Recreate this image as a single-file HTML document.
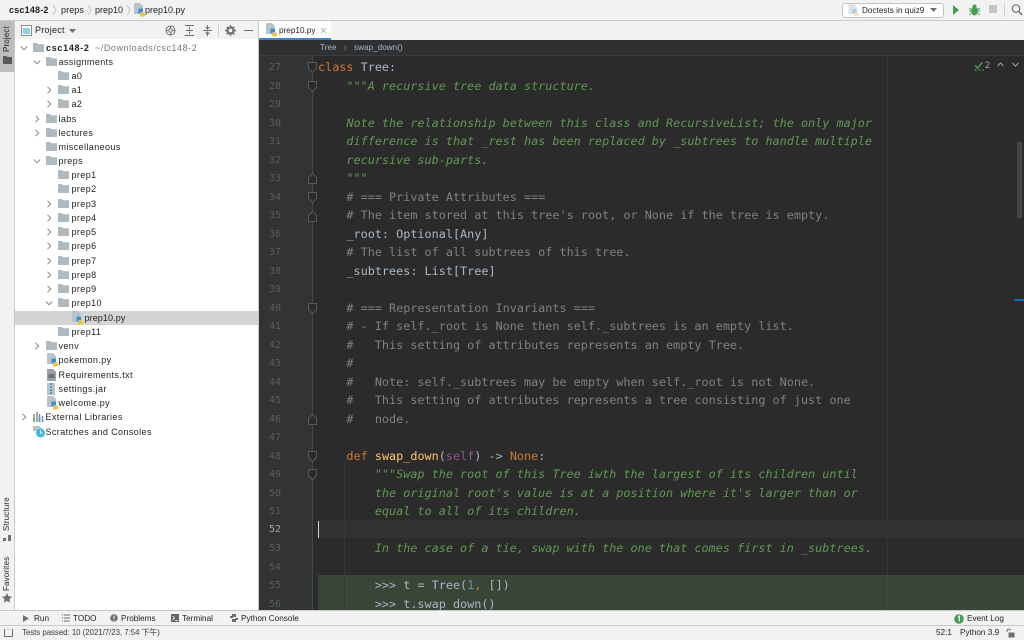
<!DOCTYPE html>
<html><head><meta charset="utf-8">
<style>
html,body{margin:0;padding:0;width:1024px;height:640px;overflow:hidden;background:#f2f2f2}
body{font-family:"Liberation Sans","Noto Sans CJK SC",sans-serif;font-size:9px;color:#1f1f1f;position:relative;filter:blur(.3px)}
.a{position:absolute}
.t{position:absolute;white-space:pre;line-height:12px;letter-spacing:.1px}
.row{position:absolute;left:15px;width:243px;height:14px}
.row .l{position:absolute;top:1px;white-space:pre;line-height:12px;letter-spacing:.4px}
.row svg{position:absolute}
.c{position:absolute;left:318px;white-space:pre;font-family:"DejaVu Sans Mono","Liberation Mono",monospace;font-size:11.8px;line-height:18px;color:#a9b7c6}
.n{position:absolute;left:262px;width:19px;margin-top:1px;text-align:right;font-family:"DejaVu Sans Mono","Liberation Mono",monospace;font-size:10px;line-height:18px;color:#5a5d60}
.k{color:#cc7832}.d{color:#629755;font-style:italic}.m{color:#808080}.f{color:#ffc66d}.s{color:#94558d}.b{color:#6897bb}
.v{position:absolute;transform:rotate(-90deg);transform-origin:0 0;white-space:pre;font-size:8px;line-height:10px;letter-spacing:.15px}
.bt{position:absolute;margin-top:1px;white-space:pre;line-height:12px;font-size:8.2px;letter-spacing:0}
</style></head><body>
<svg width="0" height="0" style="position:absolute">
<defs>
<symbol id="fo" viewBox="0 0 11 9"><path d="M0 0h4l1 1.200h6V9H0z" fill="#aeb9c0"/></symbol>
<symbol id="py" viewBox="0 0 12 14"><path d="M0 0h6l3 3v8H0z" fill="#b9c3cb"/><path d="M4.500 6.500a1 1 0 0 1 1-1h2.500a1 1 0 0 1 1 1V9H6.500v1.500h-2z" fill="#3f8fc9"/><path d="M6 11h2.500V9.500H11V12a1.500 1.500 0 0 1-1.500 1.500H7A1 1 0 0 1 6 12.500z" fill="#f5c52d"/></symbol>
<symbol id="r" viewBox="0 0 8 8"><path d="M2.500 .8l3.200 3.200-3.200 3.200" fill="none" stroke="#858585" stroke-width="1"/></symbol>
<symbol id="dn" viewBox="0 0 8 8"><path d="M.8 2.500l3.200 3.200 3.200-3.200" fill="none" stroke="#858585" stroke-width="1"/></symbol>
<symbol id="fd" viewBox="0 0 9 11"><path d="M.5.5h8v6l-4 4-4-4z" fill="#2b2b2b" stroke="#55585a"/></symbol>
<symbol id="fu" viewBox="0 0 9 11"><path d="M.5 10.500h8v-6l-4-4-4 4z" fill="#2b2b2b" stroke="#55585a"/></symbol>
</defs></svg>

<!-- top nav -->
<div class="a" style="left:0;top:20px;width:1024px;height:1px;background:#c9c9c9"></div>
<div class="t" style="left:9px;top:4px;font-weight:bold;letter-spacing:.2px">csc148-2</div>
<div class="t" style="left:61px;top:4px">preps</div>
<div class="t" style="left:95px;top:4px;letter-spacing:0">prep10</div>
<div class="t" style="left:145px;top:4px;letter-spacing:0">prep10.py</div>
<svg class="a" style="left:52px;top:4px" width="6" height="12"><path d="M1 1l3 5-3 5" fill="none" stroke="#c4c4c4"/></svg>
<svg class="a" style="left:87px;top:4px" width="6" height="12"><path d="M1 1l3 5-3 5" fill="none" stroke="#c4c4c4"/></svg>
<svg class="a" style="left:126px;top:4px" width="6" height="12"><path d="M1 1l3 5-3 5" fill="none" stroke="#c4c4c4"/></svg>
<svg class="a" style="left:134px;top:3px" width="12" height="14"><use href="#py"/></svg>

<!-- run config -->
<div class="a" style="left:842px;top:3px;width:100px;height:13px;background:#fff;border:1px solid #c4c4c4;border-radius:3px"></div>
<svg class="a" style="left:848px;top:4px" width="12" height="13"><use href="#py" opacity=".45"/></svg>
<div class="bt" style="left:862px;top:4px">Doctests in quiz9</div>
<svg class="a" style="left:930px;top:7px" width="8" height="6"><path d="M0 1h7L3.500 5z" fill="#6e6e6e"/></svg>
<svg class="a" style="left:952px;top:5px" width="9" height="10"><path d="M1 0l6 5-6 5z" fill="#499c54"/></svg>
<svg class="a" style="left:969px;top:4px" width="11" height="12"><ellipse cx="5.500" cy="7" rx="3.500" ry="4.500" fill="#499c54"/><path d="M0 4l2 1.500M11 4L9 5.500M0 7h2M9 7h2M0 11l2-1.500M11 11l-2-1.500" stroke="#499c54"/><circle cx="5.500" cy="2.500" r="2" fill="#499c54"/></svg>
<div class="a" style="left:989px;top:5px;width:8px;height:8px;background:#c4c4c4"></div>
<div class="a" style="left:1004px;top:3px;width:1px;height:14px;background:#d0d0d0"></div>
<svg class="a" style="left:1011px;top:3px" width="12" height="13"><circle cx="5" cy="5.500" r="3.700" fill="none" stroke="#6e6e6e" stroke-width="1.200"/><path d="M8 8.500l3 3.500" stroke="#6e6e6e" stroke-width="1.400"/></svg>

<!-- left strip -->
<div class="a" style="left:0;top:21px;width:14px;height:590px;background:#f2f2f2;border-right:1px solid #c9c9c9"></div>
<div class="a" style="left:0;top:21px;width:14px;height:51px;background:#bdbdbd"></div>
<div class="v" style="left:2px;top:52px">Project</div>
<svg class="a" style="left:3px;top:56px" width="9" height="8"><path d="M0 0h3.500l1 1H9v7H0z" fill="#595959"/></svg>
<div class="v" style="left:2px;top:531px">Structure</div>
<svg class="a" style="left:3px;top:535px" width="9" height="6"><path d="M0 3h3v3H0zM5 0h3v6H5z" fill="#6e6e6e"/></svg>
<div class="v" style="left:2px;top:591px">Favorites</div>
<svg class="a" style="left:2px;top:593px" width="10" height="10"><path d="M5 0l1.500 3.300 3.500.4-2.600 2.400.7 3.500L5 7.900 1.900 9.600l.7-3.500L0 3.700l3.500-.4z" fill="#6e6e6e"/></svg>

<!-- project panel -->
<div class="a" style="left:15px;top:21px;width:244px;height:18px;background:#f2f2f2"></div>
<div class="a" style="left:15px;top:39px;width:244px;height:572px;background:#fff"></div>
<svg class="a" style="left:21px;top:25px" width="11" height="11"><rect x=".5" y=".5" width="10" height="10" fill="#fff" stroke="#8a8f94"/><rect x="2" y="3" width="7" height="6" fill="#8ed0ee"/></svg>
<div class="t" style="left:35px;top:24px;letter-spacing:.25px">Project</div>
<svg class="a" style="left:69px;top:28px" width="8" height="6"><path d="M0 1h7L3.500 5z" fill="#6e6e6e"/></svg>
<svg class="a" style="left:165px;top:25px" width="11" height="11"><circle cx="5.500" cy="5.500" r="4.500" fill="none" stroke="#6e6e6e"/><circle cx="5.500" cy="5.500" r="1.800" fill="none" stroke="#6e6e6e"/><path d="M5.500 1v2M5.500 8v2M1 5.500h2M8 5.500h2" stroke="#6e6e6e"/></svg>
<svg class="a" style="left:184px;top:25px" width="11" height="11"><path d="M1 .5h9M1 10.500h9M2 5.500h7M5.500 2v2.500M5.500 6.500V9" stroke="#6e6e6e" fill="none"/></svg>
<svg class="a" style="left:202px;top:25px" width="11" height="11"><path d="M1 5.500h9M5.500 0v3M5.500 8v3M3.500 2l2 2 2-2M3.500 9l2-2 2 2" stroke="#6e6e6e" fill="none"/></svg>
<div class="a" style="left:218px;top:23px;width:1px;height:14px;background:#d0d0d0"></div>
<svg class="a" style="left:225px;top:25px" width="11" height="11"><circle cx="5.500" cy="5.500" r="3" fill="none" stroke="#6e6e6e" stroke-width="2.200"/><path d="M5.500 0v2M5.500 9v2M0 5.500h2M9 5.500h2M1.700 1.700l1.400 1.400M8 8l1.400 1.400M9.300 1.700L8 3.100M3 8l-1.400 1.400" stroke="#6e6e6e" stroke-width="1.400"/></svg>
<div class="a" style="left:244px;top:30px;width:9px;height:1px;background:#6e6e6e"></div>

<!-- tree -->
<div class="a" style="left:15px;top:311px;width:243px;height:14px;background:#d4d4d4"></div>
<div class="row" style="top:41px"><svg style="left:5px;top:3px" width="8" height="8"><use href="#dn"/></svg><svg style="left:18px;top:2px" width="11" height="9"><use href="#fo"/></svg><span class="l" style="left:31px;font-weight:bold;letter-spacing:.7px">csc148-2</span><span class="l" style="left:80px;color:#787878;letter-spacing:.55px">~/Downloads/csc148-2</span></div>
<div class="row" style="top:55px"><svg style="left:18px;top:3px" width="8" height="8"><use href="#dn"/></svg><svg style="left:31px;top:2px" width="11" height="9"><use href="#fo"/></svg><span class="l" style="left:43.500px">assignments</span></div>
<div class="row" style="top:69px"><svg style="left:43px;top:2px" width="11" height="9"><use href="#fo"/></svg><span class="l" style="left:56.500px">a0</span></div>
<div class="row" style="top:83px"><svg style="left:30px;top:3px" width="8" height="8"><use href="#r"/></svg><svg style="left:43px;top:2px" width="11" height="9"><use href="#fo"/></svg><span class="l" style="left:56.500px">a1</span></div>
<div class="row" style="top:97px"><svg style="left:30px;top:3px" width="8" height="8"><use href="#r"/></svg><svg style="left:43px;top:2px" width="11" height="9"><use href="#fo"/></svg><span class="l" style="left:56.500px">a2</span></div>
<div class="row" style="top:112px"><svg style="left:18px;top:3px" width="8" height="8"><use href="#r"/></svg><svg style="left:31px;top:2px" width="11" height="9"><use href="#fo"/></svg><span class="l" style="left:43.500px">labs</span></div>
<div class="row" style="top:126px"><svg style="left:18px;top:3px" width="8" height="8"><use href="#r"/></svg><svg style="left:31px;top:2px" width="11" height="9"><use href="#fo"/></svg><span class="l" style="left:43.500px">lectures</span></div>
<div class="row" style="top:140px"><svg style="left:31px;top:2px" width="11" height="9"><use href="#fo"/></svg><span class="l" style="left:43.500px">miscellaneous</span></div>
<div class="row" style="top:154px"><svg style="left:18px;top:3px" width="8" height="8"><use href="#dn"/></svg><svg style="left:31px;top:2px" width="11" height="9"><use href="#fo"/></svg><span class="l" style="left:43.500px">preps</span></div>
<div class="row" style="top:168px"><svg style="left:43px;top:2px" width="11" height="9"><use href="#fo"/></svg><span class="l" style="left:56.500px">prep1</span></div>
<div class="row" style="top:182px"><svg style="left:43px;top:2px" width="11" height="9"><use href="#fo"/></svg><span class="l" style="left:56.500px">prep2</span></div>
<div class="row" style="top:197px"><svg style="left:30px;top:3px" width="8" height="8"><use href="#r"/></svg><svg style="left:43px;top:2px" width="11" height="9"><use href="#fo"/></svg><span class="l" style="left:56.500px">prep3</span></div>
<div class="row" style="top:211px"><svg style="left:30px;top:3px" width="8" height="8"><use href="#r"/></svg><svg style="left:43px;top:2px" width="11" height="9"><use href="#fo"/></svg><span class="l" style="left:56.500px">prep4</span></div>
<div class="row" style="top:225px"><svg style="left:30px;top:3px" width="8" height="8"><use href="#r"/></svg><svg style="left:43px;top:2px" width="11" height="9"><use href="#fo"/></svg><span class="l" style="left:56.500px">prep5</span></div>
<div class="row" style="top:239px"><svg style="left:30px;top:3px" width="8" height="8"><use href="#r"/></svg><svg style="left:43px;top:2px" width="11" height="9"><use href="#fo"/></svg><span class="l" style="left:56.500px">prep6</span></div>
<div class="row" style="top:254px"><svg style="left:30px;top:3px" width="8" height="8"><use href="#r"/></svg><svg style="left:43px;top:2px" width="11" height="9"><use href="#fo"/></svg><span class="l" style="left:56.500px">prep7</span></div>
<div class="row" style="top:268px"><svg style="left:30px;top:3px" width="8" height="8"><use href="#r"/></svg><svg style="left:43px;top:2px" width="11" height="9"><use href="#fo"/></svg><span class="l" style="left:56.500px">prep8</span></div>
<div class="row" style="top:282px"><svg style="left:30px;top:3px" width="8" height="8"><use href="#r"/></svg><svg style="left:43px;top:2px" width="11" height="9"><use href="#fo"/></svg><span class="l" style="left:56.500px">prep9</span></div>
<div class="row" style="top:296px"><svg style="left:30px;top:3px" width="8" height="8"><use href="#dn"/></svg><svg style="left:43px;top:2px" width="11" height="9"><use href="#fo"/></svg><span class="l" style="left:56.500px">prep10</span></div>
<div class="row" style="top:311px"><svg style="left:57px;top:0" width="12" height="14"><use href="#py"/></svg><span class="l" style="left:69.500px;letter-spacing:.1px">prep10.py</span></div>
<div class="row" style="top:325px"><svg style="left:43px;top:2px" width="11" height="9"><use href="#fo"/></svg><span class="l" style="left:56.500px">prep11</span></div>
<div class="row" style="top:339px"><svg style="left:18px;top:3px" width="8" height="8"><use href="#r"/></svg><svg style="left:31px;top:2px" width="11" height="9"><use href="#fo"/></svg><span class="l" style="left:43.500px">venv</span></div>
<div class="row" style="top:353px"><svg style="left:32px;top:0" width="12" height="14"><use href="#py"/></svg><span class="l" style="left:43.500px">pokemon.py</span></div>
<div class="row" style="top:368px"><svg style="left:32px;top:1px" width="9" height="12"><path d="M0 0h6l3 3v9H0z" fill="#9aa0a6"/><path d="M1.500 6h6M1.500 8h6" stroke="#444"/></svg><span class="l" style="left:43.500px">Requirements.txt</span></div>
<div class="row" style="top:382px"><svg style="left:32px;top:1px" width="8" height="12"><rect width="8" height="12" fill="#b9c3cb"/><path d="M4 0v12" stroke="#4a9fd0" stroke-width="2" stroke-dasharray="2 1"/></svg><span class="l" style="left:43.500px">settings.jar</span></div>
<div class="row" style="top:396px"><svg style="left:32px;top:0" width="12" height="14"><use href="#py"/></svg><span class="l" style="left:43.500px">welcome.py</span></div>
<div class="row" style="top:410px"><svg style="left:5px;top:3px" width="8" height="8"><use href="#r"/></svg><svg style="left:18px;top:1px" width="11" height="11"><path d="M1 3v8M4 1v10M6.500 3v8M9.500 5v6" stroke-width="1.500" fill="none" stroke="#7f8b91"/><path d="M1 7v4" stroke="#62b543" stroke-width="1.500"/><path d="M6.500 6v5" stroke="#4a9fd0" stroke-width="1.500"/></svg><span class="l" style="left:30.500px">External Libraries</span></div>
<div class="row" style="top:425px"><svg style="left:18px;top:0" width="12" height="13"><path d="M0 1h7l1 2v3H0z" fill="#b9c3cb"/><circle cx="7.500" cy="8" r="4.500" fill="#40b6e0"/><path d="M7.500 5.500V8h2" stroke="#fff" fill="none"/></svg><span class="l" style="left:30.500px">Scratches and Consoles</span></div>

<!-- splitter -->
<div class="a" style="left:258px;top:21px;width:1px;height:590px;background:#c9c9c9"></div>

<!-- editor tabs -->
<div class="a" style="left:259px;top:21px;width:765px;height:19px;background:#f2f2f2"></div>
<div class="a" style="left:259px;top:21px;width:72px;height:17px;background:#fff"></div>
<div class="a" style="left:259px;top:38px;width:72px;height:2px;background:#4083c9"></div>
<svg class="a" style="left:266px;top:23px" width="12" height="14"><use href="#py"/></svg>
<div class="bt" style="left:279px;top:24px">prep10.py</div>
<svg class="a" style="left:320px;top:27px" width="7" height="7"><path d="M1 1l5 5M6 1L1 6" stroke="#b5b5b5"/></svg>

<!-- editor -->
<div class="a" style="left:259px;top:40px;width:765px;height:571px;background:#2b2b2b"></div>
<div class="a" style="left:259px;top:40px;width:765px;height:15px;background:#2f3031"></div>
<div class="a" style="left:259px;top:55px;width:765px;height:1px;background:#3c3d3e"></div>
<div class="bt" style="left:320px;top:41px;color:#a9b7c6">Tree</div>
<svg class="a" style="left:344px;top:45px" width="4" height="6"><path d="M.5.5l2 2.500-2 2.500" stroke="#666" fill="none"/></svg>
<div class="bt" style="left:354px;top:41px;color:#a9b7c6">swap_down()</div>
<div class="a" style="left:259px;top:56px;width:53px;height:555px;background:#313335"></div>
<div class="a" style="left:312px;top:56px;width:1px;height:555px;background:#45474a"></div>
<div class="a" style="left:887px;top:56px;width:1px;height:555px;background:#353535"></div>
<div class="a" style="left:318px;top:520px;width:706px;height:18px;background:#323232"></div>
<div class="a" style="left:318px;top:575px;width:706px;height:36px;background:#394536"></div>
<div class="a" style="left:887px;top:575px;width:1px;height:36px;background:#3f4b3c"></div>
<div class="a" style="left:344px;top:465px;width:1px;height:146px;background:#383838"></div>
<div class="a" style="left:318px;top:521px;width:1px;height:17px;background:#d0d0d0"></div>

<svg class="a" style="left:308px;top:62px" width="9" height="11"><use href="#fd"/></svg>
<svg class="a" style="left:308px;top:81px" width="9" height="11"><use href="#fd"/></svg>
<svg class="a" style="left:308px;top:173px" width="9" height="11"><use href="#fu"/></svg>
<svg class="a" style="left:308px;top:192px" width="9" height="11"><use href="#fd"/></svg>
<svg class="a" style="left:308px;top:211px" width="9" height="11"><use href="#fu"/></svg>
<svg class="a" style="left:308px;top:303px" width="9" height="11"><use href="#fd"/></svg>
<svg class="a" style="left:308px;top:414px" width="9" height="11"><use href="#fu"/></svg>
<svg class="a" style="left:308px;top:451px" width="9" height="11"><use href="#fd"/></svg>
<svg class="a" style="left:308px;top:469px" width="9" height="11"><use href="#fd"/></svg>

<!-- line numbers -->
<div class="n" style="top:58px">27</div><div class="n" style="top:77px">28</div><div class="n" style="top:95px">29</div><div class="n" style="top:114px">30</div><div class="n" style="top:132px">31</div><div class="n" style="top:151px">32</div><div class="n" style="top:169px">33</div><div class="n" style="top:188px">34</div><div class="n" style="top:206px">35</div><div class="n" style="top:225px">36</div><div class="n" style="top:243px">37</div><div class="n" style="top:262px">38</div><div class="n" style="top:280px">39</div><div class="n" style="top:299px">40</div><div class="n" style="top:317px">41</div><div class="n" style="top:336px">42</div><div class="n" style="top:354px">43</div><div class="n" style="top:373px">44</div><div class="n" style="top:391px">45</div><div class="n" style="top:410px">46</div><div class="n" style="top:428px">47</div><div class="n" style="top:447px">48</div><div class="n" style="top:465px">49</div><div class="n" style="top:484px">50</div><div class="n" style="top:502px">51</div><div class="n" style="top:520px;color:#a4a3a3">52</div><div class="n" style="top:539px">53</div><div class="n" style="top:558px">54</div><div class="n" style="top:576px">55</div><div class="n" style="top:595px">56</div>

<!-- code -->
<div class="c" style="top:58px"><span class="k">class</span> Tree:</div>
<div class="c" style="top:77px"><span class="d">    """A recursive tree data structure.</span></div>
<div class="c" style="top:114px"><span class="d">    Note the relationship between this class and RecursiveList; the only major</span></div>
<div class="c" style="top:132px"><span class="d">    difference is that _rest has been replaced by _subtrees to handle multiple</span></div>
<div class="c" style="top:151px"><span class="d">    recursive sub-parts.</span></div>
<div class="c" style="top:169px"><span class="d">    """</span></div>
<div class="c" style="top:188px"><span class="m">    # === Private Attributes ===</span></div>
<div class="c" style="top:206px"><span class="m">    # The item stored at this tree's root, or None if the tree is empty.</span></div>
<div class="c" style="top:225px">    _root: Optional[Any]</div>
<div class="c" style="top:243px"><span class="m">    # The list of all subtrees of this tree.</span></div>
<div class="c" style="top:262px">    _subtrees: List[Tree]</div>
<div class="c" style="top:299px"><span class="m">    # === Representation Invariants ===</span></div>
<div class="c" style="top:317px"><span class="m">    # - If self._root is None then self._subtrees is an empty list.</span></div>
<div class="c" style="top:336px"><span class="m">    #   This setting of attributes represents an empty Tree.</span></div>
<div class="c" style="top:354px"><span class="m">    #</span></div>
<div class="c" style="top:373px"><span class="m">    #   Note: self._subtrees may be empty when self._root is not None.</span></div>
<div class="c" style="top:391px"><span class="m">    #   This setting of attributes represents a tree consisting of just one</span></div>
<div class="c" style="top:410px"><span class="m">    #   node.</span></div>
<div class="c" style="top:447px">    <span class="k">def</span> <span class="f">swap_down</span>(<span class="s">self</span>) -&gt; <span class="k">None</span>:</div>
<div class="c" style="top:465px"><span class="d">        """Swap the root of this Tree iwth the largest of its children until</span></div>
<div class="c" style="top:484px"><span class="d">        the original root's value is at a position where it's larger than or</span></div>
<div class="c" style="top:502px"><span class="d">        equal to all of its children.</span></div>
<div class="c" style="top:539px"><span class="d">        In the case of a tie, swap with the one that comes first in _subtrees.</span></div>
<div class="c" style="top:576px">        &gt;&gt;&gt; t = Tree(<span class="b">1</span><span class="k">,</span> [])</div>
<div class="c" style="top:595px">        &gt;&gt;&gt; t.swap_down()</div>

<!-- inspection -->
<svg class="a" style="left:974px;top:61px" width="10" height="10"><path d="M1 4.500l2.500 2.500L8.500 1.500" fill="none" stroke="#499c54" stroke-width="1.500"/><path d="M0 9h2.500M4 9h2.500M8 9h2" stroke="#499c54"/></svg>
<div class="t" style="left:985px;top:59px;color:#a4a4a4">2</div>
<svg class="a" style="left:997px;top:62px" width="7" height="5"><path d="M.5 4l3-3 3 3" fill="none" stroke="#a4a4a4"/></svg>
<svg class="a" style="left:1012px;top:62px" width="7" height="5"><path d="M.5 1l3 3 3-3" fill="none" stroke="#a4a4a4"/></svg>
<div class="a" style="left:1017px;top:142px;width:5px;height:76px;background:#454545;border-radius:2px"></div>
<div class="a" style="left:1014px;top:299px;width:10px;height:2px;background:#0b6ea8"></div>

<!-- bottom tool bar -->
<div class="a" style="left:0;top:610px;width:1024px;height:1px;background:#c9c9c9"></div>
<div class="a" style="left:0;top:611px;width:1024px;height:14px;background:#f2f2f2"></div>
<div class="a" style="left:0;top:625px;width:1024px;height:1px;background:#c9c9c9"></div>
<svg class="a" style="left:23px;top:615px" width="6" height="7"><path d="M0 0l6 3.500L0 7z" fill="#6e6e6e"/></svg>
<div class="bt" style="left:34px;top:612px">Run</div>
<svg class="a" style="left:62px;top:614px" width="8" height="8"><path d="M0 1h1M2 1h6M0 4h1M2 4h6M0 7h1M2 7h6" stroke="#6e6e6e"/></svg>
<div class="bt" style="left:73px;top:612px">TODO</div>
<svg class="a" style="left:110px;top:614px" width="8" height="8"><circle cx="4" cy="4" r="3.800" fill="#6e6e6e"/><path d="M4 1.500V5M4 6v1" stroke="#fff"/></svg>
<div class="bt" style="left:121px;top:612px">Problems</div>
<svg class="a" style="left:171px;top:614px" width="8" height="8"><rect width="8" height="8" fill="#5f6468"/><path d="M1.500 2l2 2-2 2M4 6.500h3" stroke="#fff" fill="none" stroke-width=".8"/></svg>
<div class="bt" style="left:182px;top:612px">Terminal</div>
<svg class="a" style="left:230px;top:614px" width="8" height="8"><path d="M2 0h4v3H3v1H0V2h2zM8 4v2H6v2H2V5h3V4z" fill="#6e6e6e"/></svg>
<div class="bt" style="left:241px;top:612px">Python Console</div>
<svg class="a" style="left:954px;top:614px" width="10" height="10"><circle cx="5" cy="5" r="4.800" fill="#499c54"/><path d="M4 3l1.300-.8V7.500" stroke="#fff" fill="none" stroke-width="1.200"/></svg>
<div class="bt" style="left:967px;top:612px">Event Log</div>

<!-- status bar -->
<svg class="a" style="left:4px;top:629px" width="9" height="9"><path d="M.5 0v7.500h8M8.500 0v7.500" fill="none" stroke="#6e6e6e"/><path d="M2 0h6" stroke="#c8c8c8"/></svg>
<div class="bt" style="left:22px;top:626px;font-size:7.800px;color:#3a3a3a">Tests passed: 10 (2021/7/23, 7:54 下午)</div>
<div class="bt" style="left:936px;top:626px">52:1</div>
<div class="bt" style="left:960px;top:626px">Python 3.9</div>
<svg class="a" style="left:1006px;top:628px" width="9" height="10"><path d="M1 4V2.500a1.800 1.800 0 0 1 3.500 0" fill="none" stroke="#6e6e6e"/><rect x="2.500" y="4.500" width="6" height="5" fill="#6e6e6e"/></svg>
</body></html>
